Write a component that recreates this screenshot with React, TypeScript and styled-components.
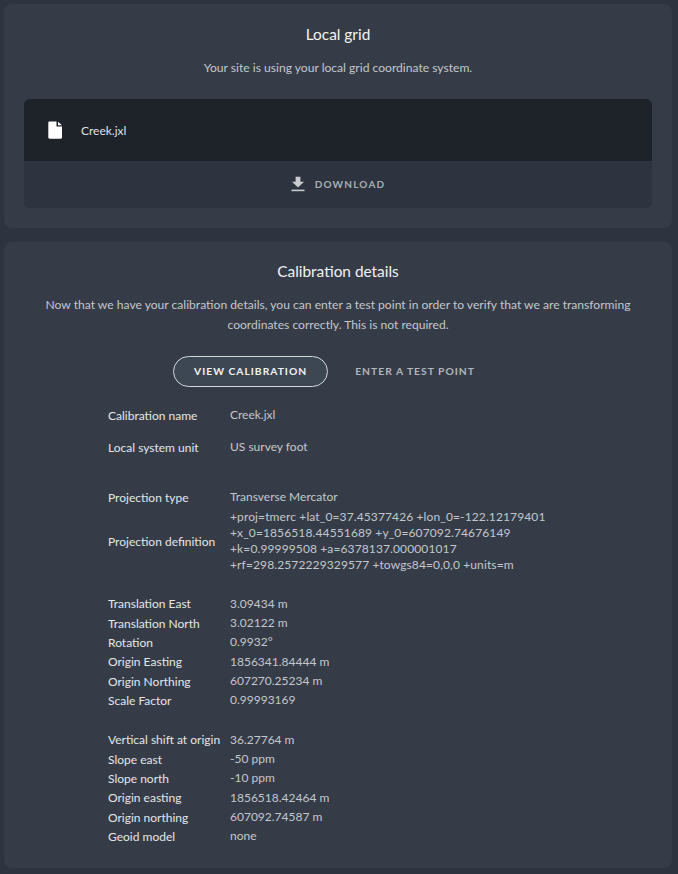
import React from "react";
import styled, { createGlobalStyle } from "styled-components";

const GlobalStyle = createGlobalStyle`
  html, body {
    margin: 0;
    padding: 0;
    background: #2e343f;
  }
  body {
    font-family: "Lato", "Open Sans", sans-serif;
    color: #e4e6e9;
  }
`;

const Page = styled.div`
  width: 678px;
  height: 874px;
  box-sizing: border-box;
  padding: 4px 6px 0 4px;
  overflow: hidden;
  display: flex;
  flex-direction: column;
  gap: 14px;
`;

const Card = styled.section<{ $height: number }>`
  height: ${(p) => p.$height}px;
  box-sizing: border-box;
  background: #353c47;
  border-radius: 8px;
  display: flex;
  flex-direction: column;
  align-items: center;
`;

const Title = styled.h2<{ $top: number }>`
  margin: ${(p) => p.$top}px 0 0;
  font-size: 15.4px;
  line-height: 20px;
  font-weight: 400;
  color: #f1f2f4;
`;

const Intro = styled.p<{ $top: number }>`
  margin: ${(p) => p.$top}px 0 0;
  width: 600px;
  text-align: center;
  font-size: 12.1px;
  line-height: 20px;
  color: #c4c7cc;
`;

const FileBox = styled.div`
  width: 628px;
  margin-top: 21px;
  border-radius: 6px;
  overflow: hidden;
  background: #2e343f;
`;

const FileRow = styled.div`
  height: 62px;
  background: #1e2229;
  display: flex;
  align-items: center;
  padding-left: 23px;
  gap: 18px;
`;

const FileName = styled.span`
  font-size: 12px;
  color: #dfe1e4;
`;

const DownloadRow = styled.div`
  height: 47px;
  box-sizing: border-box;
  padding-bottom: 1px;
  display: flex;
  align-items: center;
  justify-content: center;
  gap: 10px;
  font-size: 10px;
  font-weight: 700;
  letter-spacing: 1.2px;
  color: #a9adb3;
`;

const Tabs = styled.div`
  margin-top: 21px;
  padding-right: 28px;
  display: flex;
  align-items: center;
  gap: 27px;
`;

const Tab = styled.button<{ $active?: boolean }>`
  height: 31px;
  box-sizing: border-box;
  padding: ${(p) => (p.$active ? "0 20px 2px" : "0 0 2px")};
  border: ${(p) => (p.$active ? "1px solid #d5d8dc" : "none")};
  border-radius: 16px;
  background: ${(p) => (p.$active ? "#3c4753" : "transparent")};
  color: ${(p) => (p.$active ? "#f1f2f4" : "#b3b6bb")};
  font-family: inherit;
  font-size: 10.3px;
  font-weight: 700;
  letter-spacing: 1px;
`;

const Details = styled.div`
  align-self: stretch;
  padding-left: 104px;
  margin-top: 12px;
  display: flex;
  flex-direction: column;
`;

const Group = styled.div<{ $top?: number }>`
  margin-top: ${(p) => p.$top ?? 0}px;
`;

const Row = styled.div<{ $height: number; $top?: number }>`
  display: grid;
  grid-template-columns: 121px 1fr;
  align-items: center;
  min-height: ${(p) => p.$height}px;
  margin-top: ${(p) => p.$top ?? 0}px;
  font-size: 12px;
`;

const Label = styled.span`
  color: #e4e6e9;
  white-space: nowrap;
`;

const Value = styled.span`
  color: #c4c7cc;
  line-height: 16px;
  padding-left: 1px;
`;

const Definition = styled(Value)`
  letter-spacing: 0.12px;
`;

const FileIcon = () => (
  <svg width="16" height="18" viewBox="0 0 16 18" aria-hidden="true">
    <path
      d="M2.5 0.5H9.5V5.5H15V16.5C15 17.2 14.5 17.7 13.8 17.7H2.5C1.8 17.7 1.3 17.2 1.3 16.5V1.7C1.3 1 1.8 0.5 2.5 0.5ZM11 0.8L15 4.3H11Z"
      fill="#fff"
    />
  </svg>
);

const DownloadIcon = () => (
  <svg width="14" height="16" viewBox="0 0 14 16" aria-hidden="true">
    <path d="M4.6 0.8H9.4V5.8H13L7 11.6L1 5.8H4.6Z" fill="#c9cbcf" />
    <rect x="0.5" y="13.6" width="13" height="1.6" fill="#c9cbcf" />
  </svg>
);

const calibration = [
  ["Translation East", "3.09434 m"],
  ["Translation North", "3.02122 m"],
  ["Rotation", "0.9932°"],
  ["Origin Easting", "1856341.84444 m"],
  ["Origin Northing", "607270.25234 m"],
  ["Scale Factor", "0.99993169"],
];

const vertical = [
  ["Vertical shift at origin", "36.27764 m"],
  ["Slope east", "-50 ppm"],
  ["Slope north", "-10 ppm"],
  ["Origin easting", "1856518.42464 m"],
  ["Origin northing", "607092.74587 m"],
  ["Geoid model", "none"],
];

const App: React.FC = () => (
  <>
    <GlobalStyle />
    <Page>
      <Card $height={224}>
        <Title $top={20}>Local grid</Title>
        <Intro $top={14}>Your site is using your local grid coordinate system.</Intro>
        <FileBox>
          <FileRow>
            <FileIcon />
            <FileName>Creek.jxl</FileName>
          </FileRow>
          <DownloadRow>
            <DownloadIcon />
            DOWNLOAD
          </DownloadRow>
        </FileBox>
      </Card>
      <Card $height={626}>
        <Title $top={19}>Calibration details</Title>
        <Intro $top={14}>
          Now that we have your calibration details, you can enter a test point in order to verify
          that we are transforming coordinates correctly. This is not required.
        </Intro>
        <Tabs>
          <Tab $active>VIEW CALIBRATION</Tab>
          <Tab>ENTER A TEST POINT</Tab>
        </Tabs>
        <Details>
          <Group>
            <Row $height={32}>
              <Label>Calibration name</Label>
              <Value>Creek.jxl</Value>
            </Row>
            <Row $height={32}>
              <Label>Local system unit</Label>
              <Value>US survey foot</Value>
            </Row>
          </Group>
          <Group $top={24}>
            <Row $height={20}>
              <Label>Projection type</Label>
              <Value>Transverse Mercator</Value>
            </Row>
            <Row $height={64} $top={2}>
              <Label>Projection definition</Label>
              <Definition>
                +proj=tmerc +lat_0=37.45377426 +lon_0=-122.12179401
                <br />
                +x_0=1856518.44551689 +y_0=607092.74676149
                <br />
                +k=0.99999508 +a=6378137.000001017
                <br />
                +rf=298.2572229329577 +towgs84=0,0,0 +units=m
              </Definition>
            </Row>
          </Group>
          <Group $top={21}>
            {calibration.map(([label, value]) => (
              <Row $height={19.35} key={label}>
                <Label>{label}</Label>
                <Value>{value}</Value>
              </Row>
            ))}
          </Group>
          <Group $top={20}>
            {vertical.map(([label, value]) => (
              <Row $height={19.35} key={label}>
                <Label>{label}</Label>
                <Value>{value}</Value>
              </Row>
            ))}
          </Group>
        </Details>
      </Card>
    </Page>
  </>
);

export default App;
